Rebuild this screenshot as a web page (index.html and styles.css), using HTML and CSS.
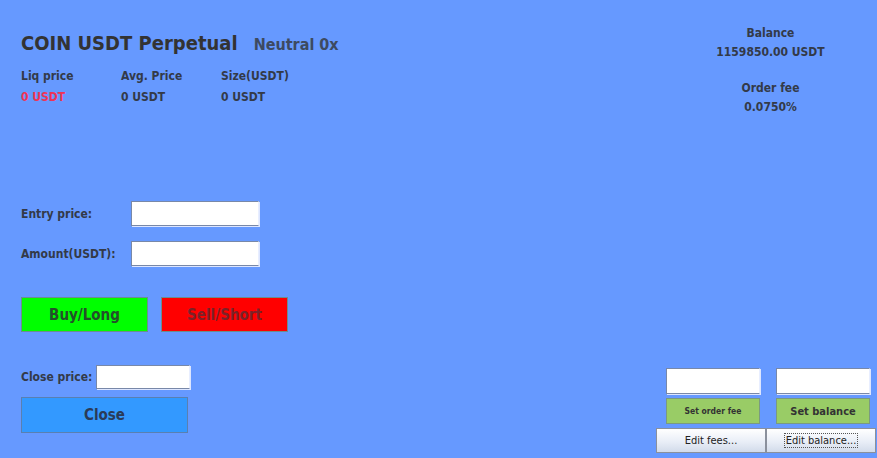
FILE: index.html
```html
<!DOCTYPE html>
<html>
<head>
<meta charset="utf-8">
<link rel="stylesheet" href="styles.css">
</head>
<body>
<div class="app">
  <div class="left">
    <div class="title-row">
      <h1 class="title">COIN USDT Perpetual</h1>
      <span class="position">Neutral 0x</span>
    </div>
    <div class="stats">
      <div class="stat"><div class="stat-label">Liq price</div><div class="stat-value liq">0 USDT</div></div>
      <div class="stat"><div class="stat-label">Avg. Price</div><div class="stat-value">0 USDT</div></div>
      <div class="stat"><div class="stat-label">Size(USDT)</div><div class="stat-value">0 USDT</div></div>
    </div>
    <div class="form">
      <div class="form-row"><label class="form-label">Entry price:</label><input class="field field-lg" type="text"></div>
      <div class="form-row"><label class="form-label">Amount(USDT):</label><input class="field field-lg" type="text"></div>
    </div>
    <div class="trade">
      <button class="btn btn-buy">Buy/Long</button>
      <button class="btn btn-sell">Sell/Short</button>
    </div>
    <div class="close-row">
      <label class="form-label">Close price:</label><input class="field field-sm" type="text">
    </div>
    <button class="btn btn-close">Close</button>
  </div>
  <div class="right">
    <div class="info">
      <div class="info-label">Balance</div>
      <div class="info-value">1159850.00 USDT</div>
      <div class="info-label gap">Order fee</div>
      <div class="info-value">0.0750%</div>
    </div>
    <div class="settings">
      <div class="cell"><input class="field field-set" type="text"></div>
      <div class="cell"><input class="field field-set" type="text"></div>
      <div class="cell"><button class="btn-set tiny">Set order fee</button></div>
      <div class="cell"><button class="btn-set">Set balance</button></div>
      <button class="btn-edit">Edit fees...</button>
      <button class="btn-edit"><span class="focus">Edit balance...</span></button>
    </div>
  </div>
</div>
</body>
</html>
```
FILE: styles.css
```css
* { box-sizing: border-box; }
html, body { margin: 0; padding: 0; }
body {
  background: #6699ff;
  font-family: "DejaVu Sans Condensed", "DejaVu Sans", sans-serif;
  color: #333a48;
}
.app {
  display: flex;
  justify-content: space-between;
  width: 877px;
  height: 458px;
}
.left {
  display: flex;
  flex-direction: column;
  align-items: flex-start;
  padding: 30px 0 0 21px;
}
.title-row {
  display: flex;
  align-items: baseline;
  gap: 16px;
}
.title {
  margin: 0;
  font-size: 20px;
  line-height: 26px;
  font-weight: bold;
  color: #333;
}
.position {
  font-size: 16px;
  font-weight: bold;
  color: #3d4a60;
}
.stats {
  display: grid;
  grid-template-columns: 100px 100px 100px;
  margin-top: 13px;
}
.stat-label, .stat-value {
  font-size: 12px;
  font-weight: bold;
  line-height: 14px;
}
.stat-value { margin-top: 7px; }
.liq { color: #ee3355; }
.form {
  margin-top: 97px;
  display: flex;
  flex-direction: column;
  gap: 15px;
}
.form-row, .close-row {
  display: flex;
  align-items: center;
}
.form-label {
  font-size: 12px;
  font-weight: bold;
}
.form-row .form-label { width: 110px; }
.close-row .form-label { width: 75px; }
.field {
  background: #fff;
  border: 1px solid #7888a8;
  border-right-color: #e8eeff;
  border-bottom-color: #7888a8;
  box-shadow: 1px 1px 0 #dde6ff;
  height: 25px;
  padding: 0 3px;
  font-family: inherit;
  font-size: 12px;
}
.field-lg { width: 128px; }
.field-sm { width: 94px; height: 24px; }
.trade {
  display: flex;
  gap: 13px;
  margin-top: 31px;
}
.btn {
  font-family: inherit;
  font-weight: bold;
  font-size: 15px;
  cursor: pointer;
}
.btn-buy, .btn-sell {
  width: 127px;
  height: 35px;
  border: 1px solid #6b8e8e;
}
.btn-buy { background: #00ff00; color: #24502a; }
.btn-sell { background: #ff0000; color: #7a2228; }
.close-row { margin-top: 33px; }
.btn-close {
  margin-top: 8px;
  width: 167px;
  height: 36px;
  background: #3399ff;
  border: 1px solid #5a80b0;
  color: #2a3b58;
}
.right {
  width: 221px;
  display: flex;
  flex-direction: column;
  justify-content: space-between;
  padding: 26px 0 5px 0;
}
.info {
  text-align: center;
  padding-left: 8px;
  font-size: 12px;
  font-weight: bold;
  line-height: 14px;
}
.info-value { margin-top: 5px; }
.info-label.gap { margin-top: 22px; }
.settings {
  display: grid;
  grid-template-columns: 110px 110px;
  row-gap: 4px;
}
.cell { padding-left: 10px; }
.field-set { width: 94px; height: 26px; display: block; }
.btn-set {
  display: block;
  width: 94px;
  height: 26px;
  background: #99cc66;
  border: 1px solid #7a9a80;
  font-family: inherit;
  font-size: 11px;
  color: #333;
}
.btn-set.tiny { font-size: 8.5px; font-weight: bold; }
.btn-set:not(.tiny) { font-weight: bold; }
.btn-edit {
  height: 25px;
  background: linear-gradient(#ffffff, #e9eef7 55%, #d2dbea);
  border: 1px solid #8a909c;
  font-family: inherit;
  font-size: 11px;
  color: #222;
  padding: 0;
}
.focus {
  outline: 1px dotted #555;
  padding: 0 1px;
}
```
